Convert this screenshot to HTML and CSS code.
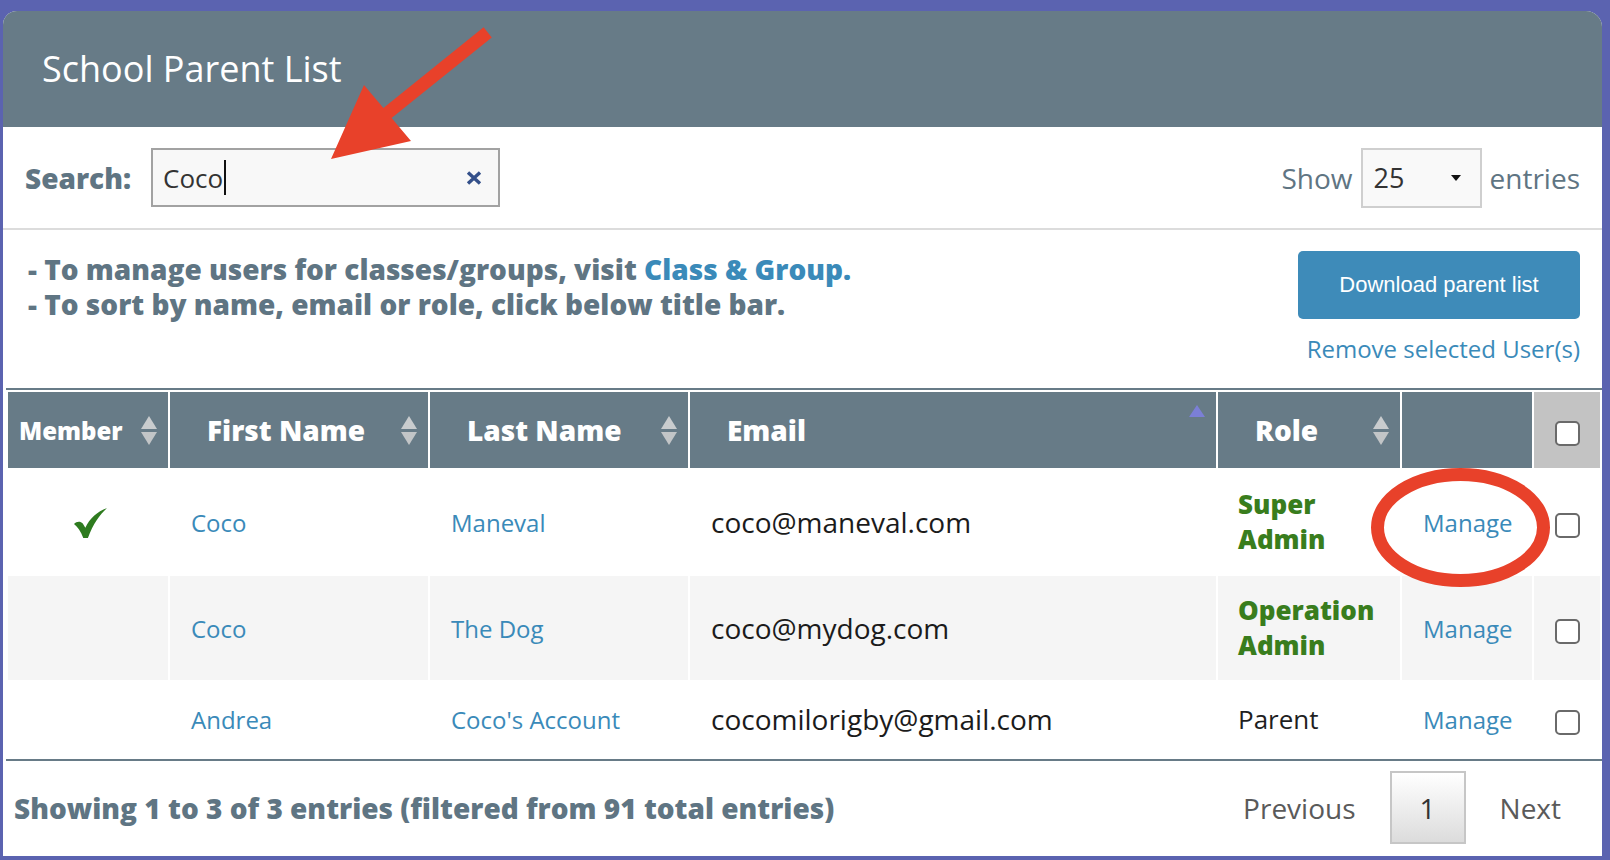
FILE: index.html
```html
<!DOCTYPE html>
<html lang="en">
<head>
<meta charset="utf-8">
<title>School Parent List</title>
<link rel="stylesheet" href="styles.css">
</head>
<body>
<div class="card">
  <div class="card-head"><h1>School Parent List</h1></div>

  <div class="toolbar">
    <div class="search">
      <span class="search-label">Search:</span>
      <div class="search-box">
        <span class="search-text">Coco</span><span class="text-caret"></span>
        <svg class="clear" viewBox="0 0 16 14" width="16" height="14"><path d="M2 1.5 L14 12.5 M14 1.5 L2 12.5" stroke="#34508a" stroke-width="3.4" stroke-linecap="butt"/></svg>
      </div>
    </div>
    <div class="length">
      <span>Show</span>
      <div class="select"><span>25</span><svg viewBox="0 0 10 6" width="10" height="6"><path d="M0 0 H10 L5 6 Z" fill="#111"/></svg></div>
      <span>entries</span>
    </div>
  </div>

  <div class="panel">
    <div class="info">
      <div class="notes">
        <p>- To manage users for classes/groups, visit <a class="lnk">Class &amp; Group.</a></p>
        <p>- To sort by name, email or role, click below title bar.</p>
      </div>
      <div class="actions">
        <button class="btn"><span class="btn-label">Download parent list</span></button>
        <a class="remove">Remove selected User(s)</a>
      </div>
    </div>

    <table class="grid">
      <colgroup>
        <col class="c-member"><col class="c-first"><col class="c-last"><col class="c-email"><col class="c-role"><col class="c-manage"><col class="c-check">
      </colgroup>
      <thead>
        <tr>
          <th class="th-member"><div class="th-in"><span>Member</span><svg class="sort" viewBox="0 0 16 29" width="16" height="29"><path d="M0 13 L8 0 L16 13 Z" fill="#c9ccce"/><path d="M0 16 H16 L8 29 Z" fill="#c2c5c7"/></svg></div></th>
          <th><div class="th-in"><span>First Name</span><svg class="sort" viewBox="0 0 16 29" width="16" height="29"><path d="M0 13 L8 0 L16 13 Z" fill="#c9ccce"/><path d="M0 16 H16 L8 29 Z" fill="#c2c5c7"/></svg></div></th>
          <th><div class="th-in"><span>Last Name</span><svg class="sort" viewBox="0 0 16 29" width="16" height="29"><path d="M0 13 L8 0 L16 13 Z" fill="#c9ccce"/><path d="M0 16 H16 L8 29 Z" fill="#c2c5c7"/></svg></div></th>
          <th><div class="th-in"><span>Email</span><svg class="sort-up" viewBox="0 0 16 12" width="16" height="12"><path d="M0 12 L8 0 L16 12 Z" fill="#7b7fd6"/></svg></div></th>
          <th><div class="th-in"><span>Role</span><svg class="sort" viewBox="0 0 16 29" width="16" height="29"><path d="M0 13 L8 0 L16 13 Z" fill="#c9ccce"/><path d="M0 16 H16 L8 29 Z" fill="#c2c5c7"/></svg></div></th>
          <th class="th-blank"></th>
          <th class="th-check"><span class="cbox"></span></th>
        </tr>
      </thead>
      <tbody>
        <tr>
          <td class="td-member"><svg class="tick" viewBox="0 0 32 29" width="33" height="30"><path d="M0 15.5 C2.5 13 6 12.5 8.5 15 L11 19 C15 10.5 22.5 3.5 32 0 C25 6.5 18.5 15.5 13.5 29 L9 29 C6.5 22.5 3.5 18.5 0 15.5 Z" fill="#2e7b1f"/></svg></td>
          <td><a class="lnk">Coco</a></td>
          <td><a class="lnk">Maneval</a></td>
          <td class="email">coco@maneval.com</td>
          <td class="role">Super<br>Admin</td>
          <td class="manage"><a class="lnk">Manage</a></td>
          <td class="td-check"><span class="cbox"></span></td>
        </tr>
        <tr class="stripe">
          <td class="td-member"></td>
          <td><a class="lnk">Coco</a></td>
          <td><a class="lnk">The Dog</a></td>
          <td class="email">coco@mydog.com</td>
          <td class="role">Operation<br>Admin</td>
          <td class="manage"><a class="lnk">Manage</a></td>
          <td class="td-check"><span class="cbox"></span></td>
        </tr>
        <tr class="short">
          <td class="td-member"></td>
          <td><a class="lnk">Andrea</a></td>
          <td><a class="lnk">Coco's Account</a></td>
          <td class="email">cocomilorigby@gmail.com</td>
          <td class="role plain">Parent</td>
          <td class="manage"><a class="lnk">Manage</a></td>
          <td class="td-check"><span class="cbox"></span></td>
        </tr>
      </tbody>
    </table>

    <div class="footer">
      <div class="count">Showing 1 to 3 of 3 entries (filtered from 91 total entries)</div>
      <div class="pager">
        <span class="pg">Previous</span>
        <span class="pg-cur">1</span>
        <span class="pg">Next</span>
      </div>
    </div>
  </div>
</div>

<svg class="annot" viewBox="0 0 1610 860" width="1610" height="860">
  <polygon points="483.6,27.2 383.4,107.9 364,85 331,159 411,141 391.6,118.1 491.8,37.4" fill="#e8412a"/>
  <ellipse cx="1460.5" cy="527.5" rx="83" ry="53" fill="none" stroke="#e8412a" stroke-width="13"/>
</svg>
</body>
</html>
```

FILE: styles.css
```css
* { box-sizing: border-box; }

body {
  margin: 0;
  height: 860px;
  overflow: hidden;
  position: relative;
  background: #5b63b0;
  font-family: "Open Sans", "Liberation Sans", sans-serif;
}

.card {
  margin: 11px 0 0 3px;
  width: 1599px;
  height: 845px;
  background: #fff;
  border-radius: 14px 16px 0 0;
  overflow: hidden;
}

.card-head {
  height: 116px;
  background: #677b87;
  padding: 0 0 1px 39px;
  display: flex;
  align-items: center;
}

.card-head h1 {
  margin: 0;
  font-weight: 400;
  font-size: 36px;
  line-height: 1;
  color: #fff;
}

/* toolbar */
.toolbar {
  height: 101px;
  display: flex;
  align-items: center;
  justify-content: space-between;
  padding: 0 22px 0 22px;
}

.search {
  display: flex;
  align-items: center;
  gap: 20px;
}

.search-label {
  font-weight: 800;
  font-size: 28px;
  color: #5f7583;
}

.search-box {
  width: 349px;
  height: 59px;
  border: 2px solid #a2a2a2;
  background: #f8f8f8;
  display: flex;
  align-items: center;
  padding: 0 16px 0 10px;
}

.search-text {
  font-size: 26px;
  color: #333;
}

.text-caret {
  width: 2px;
  height: 35px;
  background: #111;
  margin-left: 1px;
}

.clear { margin-left: auto; }

.length {
  display: flex;
  align-items: center;
  gap: 8px;
  font-size: 28px;
  color: #5f7583;
}

.select {
  width: 121px;
  height: 60px;
  border: 2px solid #cfcfcf;
  background: #f9f9f9;
  display: flex;
  align-items: center;
  justify-content: space-between;
  padding: 0 19px 0 11px;
  font-size: 27px;
  color: #333;
}

/* panel */
.panel {
  border-top: 2px solid #dcdcdc;
}

.info {
  height: 158px;
  display: flex;
  justify-content: space-between;
  padding: 22px 22px 0 25px;
}

.notes p {
  margin: 0;
  font-weight: 800;
  font-size: 28px;
  line-height: 35px;
  color: #5f7583;
}

.lnk { color: #3a8ab9; text-decoration: none; }

.actions {
  display: flex;
  flex-direction: column;
  align-items: flex-end;
}

.btn {
  width: 282px;
  height: 68px;
  margin-top: -1px;
  padding: 0;
  border: 0;
  border-radius: 5px;
  background: #3e8bb9;
  color: #fff;
  font: 400 22px "Liberation Sans", Arial, Helvetica, sans-serif;
}

.btn-label {
  font-family: "Liberation Sans", Arial, Helvetica, sans-serif;
}

.remove {
  margin-top: 14px;
  font-size: 24px;
  line-height: 32px;
  color: #3a8ab9;
}

/* table */
.grid {
  margin-left: 3px;
  width: 1596px;
  table-layout: fixed;
  border-collapse: separate;
  border-spacing: 2px;
  border-top: 2px solid #677b87;
  border-bottom: 2px solid #677b87;
}

.c-member { width: 160px; }
.c-first { width: 258px; }
.c-last { width: 258px; }
.c-email { width: 526px; }
.c-role { width: 182px; }
.c-manage { width: 130px; }
.c-check { width: 66px; }

.grid th {
  height: 76px;
  padding: 0 11px 0 37px;
  background: #677b87;
  color: #fff;
  font-weight: 800;
  font-size: 28px;
  text-align: left;
}

.grid th.th-member {
  padding-left: 11px;
  font-size: 24px;
}

.th-in {
  display: flex;
  align-items: center;
  justify-content: space-between;
}

.sort-up {
  align-self: flex-start;
  margin-top: -6px;
}

.grid th.th-check {
  background: #c3c3c3;
  padding: 0;
  text-align: center;
}

.cbox {
  display: inline-block;
  width: 25px;
  height: 25px;
  border: 2px solid #6a6a6a;
  border-radius: 5px;
  background: #fff;
  vertical-align: middle;
}

.grid td {
  padding: 17px 10px 17px 21px;
  font-size: 24px;
  line-height: 35px;
  vertical-align: middle;
  background: #fff;
  color: #1b1b1b;
}

.grid tr.short td { height: 75px; }

.grid tr.stripe td { background: #f5f5f5; }

.grid td.td-member {
  padding: 0;
  text-align: center;
}

.tick { vertical-align: middle; margin-left: 5px; margin-top: -4px; }

.grid td.email {
  font-size: 28px;
  color: #1b1b1b;
}

.grid td.role {
  padding-left: 20px;
  font-weight: 800;
  font-size: 26px;
  color: #397d1d;
}

.grid td.role.plain {
  font-weight: 400;
  color: #1f1f1f;
}

.grid td.td-check {
  padding: 0;
  text-align: center;
}

/* footer */
.footer {
  height: 93px;
  display: flex;
  align-items: center;
  justify-content: space-between;
  padding: 0 41px 0 11px;
}

.count {
  font-weight: 800;
  font-size: 28px;
  color: #5f7583;
}

.pager {
  display: flex;
  align-items: center;
  font-size: 28px;
  color: #5a5a5a;
}

.pg-cur {
  width: 76px;
  height: 73px;
  margin: 0 34px 0 34px;
  border: 2px solid #c6c6c6;
  background: linear-gradient(#ffffff, #dcdcdc);
  display: flex;
  align-items: center;
  justify-content: center;
  color: #333;
}

/* annotation overlay */
.annot {
  position: absolute;
  left: 0;
  top: 0;
  pointer-events: none;
}
```
